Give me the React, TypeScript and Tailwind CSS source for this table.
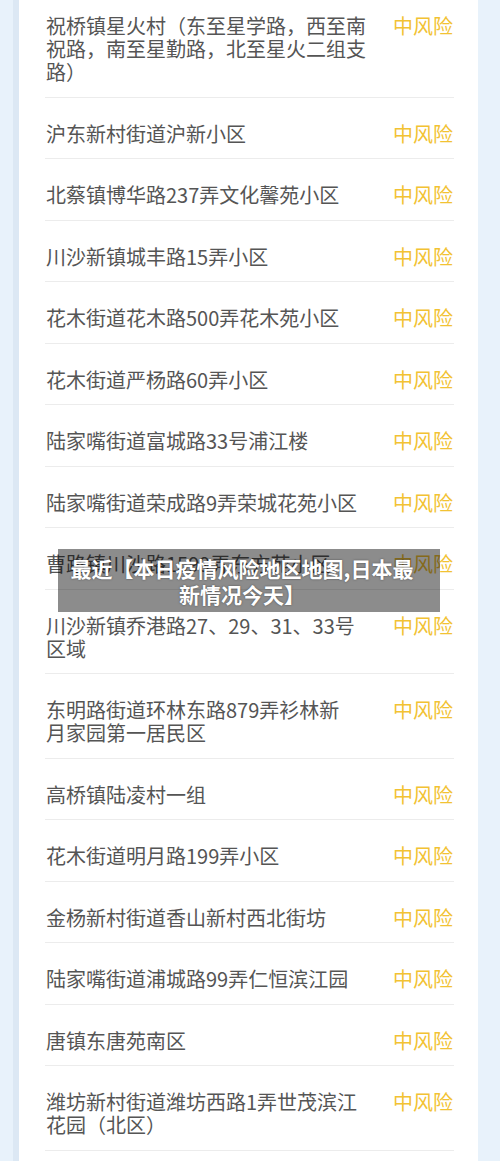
const rows: string[][] = [
  ["祝桥镇星火村（东至星学路，西至南", "祝路，南至星勤路，北至星火二组支", "路）"],
  ["沪东新村街道沪新小区"],
  ["北蔡镇博华路237弄文化馨苑小区"],
  ["川沙新镇城丰路15弄小区"],
  ["花木街道花木路500弄花木苑小区"],
  ["花木街道严杨路60弄小区"],
  ["陆家嘴街道富城路33号浦江楼"],
  ["陆家嘴街道荣成路9弄荣城花苑小区"],
  ["曹路镇川沙路1599弄东方苑小区"],
  ["川沙新镇乔港路27、29、31、33号", "区域"],
  ["东明路街道环林东路879弄衫林新", "月家园第一居民区"],
  ["高桥镇陆凌村一组"],
  ["花木街道明月路199弄小区"],
  ["金杨新村街道香山新村西北街坊"],
  ["陆家嘴街道浦城路99弄仁恒滨江园"],
  ["唐镇东唐苑南区"],
  ["潍坊新村街道潍坊西路1弄世茂滨江", "花园（北区）"],
];

function RiskRow({ lines, first }: { lines: string[]; first?: boolean }) {
  return (
    <div
      className={`flex items-start justify-between border-b border-[#ececec] pb-[13.5px] ${
        first ? "pt-[14px]" : "pt-[24px]"
      }`}
    >
      <div className="pl-[1px] text-[20px] leading-[23px] text-[#555555] whitespace-nowrap">
        {lines.map((l, i) => (
          <div key={i}>{l}</div>
        ))}
      </div>
      <div className="shrink-0 pr-[1px] text-[20px] leading-[23px] text-[#f2c233]">中风险</div>
    </div>
  );
}

export default function App() {
  return (
    <div
      className="relative h-[1161px] overflow-hidden bg-[#e8f2fb]"
      style={{ fontFamily: '"Noto Sans CJK SC", "Noto Sans", sans-serif' }}
    >
      <div className="ml-[13px] h-full w-[465px] border-l-[6px] border-[#dce8f4] bg-white">
        <div className="ml-[26px] mr-[24px]">
          {rows.map((r, i) => (
            <RiskRow key={i} lines={r} first={i === 0} />
          ))}
        </div>
      </div>

      {/* caption overlay */}
      <div className="absolute left-[58px] top-[549px] flex h-[63px] w-[382px] items-center justify-center bg-black/45 pl-[12px] pr-[26px]">
        <div className="text-center text-[21px] font-bold leading-[26px] text-white [text-shadow:0_0_2px_rgba(0,0,0,0.5)]">
          最近【本日疫情风险地区地图,日本最
          <br />
          新情况今天】
        </div>
      </div>
    </div>
  );
}
